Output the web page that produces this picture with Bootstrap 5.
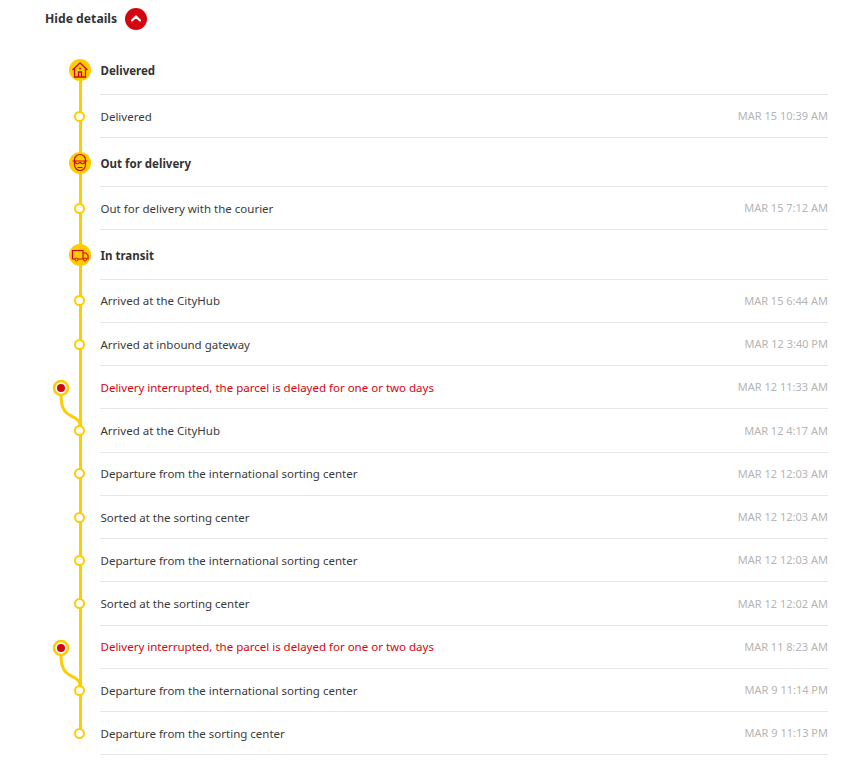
<!DOCTYPE html>
<html lang="en"><head><meta charset="utf-8">
<link href="https://cdn.jsdelivr.net/npm/bootstrap@5.3.0/dist/css/bootstrap.min.css" rel="stylesheet">
<style>
body{background:#fff;color:#3a3a3a;font-family:"Noto Sans","Open Sans",sans-serif;font-size:11.5px;overflow:hidden}
.page-box{padding:7px 36px 0 45px}
.toggle-row{height:23px}
.toggle-label{font-weight:700;font-size:12.2px;color:#333;line-height:23px}
.toggle-btn{width:22px;height:22px;background:#d40511;border:0;padding:0;margin-left:8px}
.tl{position:relative;margin-top:15.6px;padding-left:55px}
.rail{position:absolute;left:34px;top:25px;height:663px;width:3px;background:#fc0}
.tl-row{position:relative;border-bottom:1px solid #e6e6e6;height:43.25px;padding:.5px 0 0 .5px}
.tl-head{height:49.2px;font-weight:700;padding-top:2px;color:#333}
.tl-first{padding-top:1px}
.when{color:#b5b5b5;font-size:11px}
.alert-text{color:#d40511}
.node{position:absolute;left:-26px;top:50%;margin-top:-5.3px;width:11px;height:11px;border-radius:50%;background:#fff;border:2px solid #fc0}
.badge-ico{position:absolute;left:-31px;top:50%;margin-top:-10.3px;width:22px;height:22px}
.detour{position:absolute;left:-50px;top:11px;width:34px;height:52px;overflow:visible}
</style></head><body>
<div class="page-box">
<div class="toggle-row d-flex align-items-center">
<span class="toggle-label">Hide details</span>
<button class="toggle-btn rounded-circle d-flex align-items-center justify-content-center" aria-label="Hide details"><svg width="10" height="7" viewBox="0 0 10 7"><path d="M1 5.500 5 1.500l4 4" fill="none" stroke="#fff" stroke-width="2.200" stroke-linecap="round" stroke-linejoin="round"/></svg></button>
</div>
<div class="tl">
<div class="rail"></div>
<div class="tl-row tl-head tl-first d-flex align-items-center"><svg class="badge-ico" viewBox="0 0 22 22"><circle cx="11" cy="11" r="11" fill="#fc0"/><path d="M3.500 11 11 4l7.500 7M5.500 9.500V18h11V9.500M9.500 18v-5h3v5" fill="none" stroke="#d40511" stroke-width="1.300"/><path d="M10 9.500h2" stroke="#d40511" stroke-width="1.300"/></svg>Delivered</div>
<div class="tl-row d-flex align-items-center justify-content-between"><i class="node"></i><span>Delivered</span><span class="when">MAR 15 10:39 AM</span></div>
<div class="tl-row tl-head d-flex align-items-center"><svg class="badge-ico" viewBox="0 0 22 22"><circle cx="11" cy="11" r="11" fill="#fc0"/><path d="M5.500 9V7.500a5.500 5 0 0 1 11 0V9M5.500 9v3.500a5.500 6 0 0 0 11 0V9M3.500 9h15M6 9.500c0 2.500 3.500 3 4.500 1h1c1 2 4.500 1.500 4.500-1M8.500 15.500h5" fill="none" stroke="#d40511" stroke-width="1.200"/></svg>Out for delivery</div>
<div class="tl-row d-flex align-items-center justify-content-between"><i class="node"></i><span>Out for delivery with the courier</span><span class="when">MAR 15 7:12 AM</span></div>
<div class="tl-row tl-head d-flex align-items-center"><svg class="badge-ico" viewBox="0 0 22 22"><circle cx="11" cy="11" r="11" fill="#fc0"/><path d="M3.500 6.500h10.500v8.500h-10.500zM14 9h3l2 2.500V15h-5" fill="none" stroke="#d40511" stroke-width="1.200"/><circle cx="7.500" cy="15.500" r="1.500" fill="#fc0" stroke="#d40511"/><circle cx="16" cy="15.500" r="1.500" fill="#fc0" stroke="#d40511"/></svg>In transit</div>
<div class="tl-row d-flex align-items-center justify-content-between"><i class="node"></i><span>Arrived at the CityHub</span><span class="when">MAR 15 6:44 AM</span></div>
<div class="tl-row d-flex align-items-center justify-content-between"><i class="node"></i><span>Arrived at inbound gateway</span><span class="when">MAR 12 3:40 PM</span></div>
<div class="tl-row d-flex align-items-center justify-content-between"><svg class="detour" viewBox="0 0 34 52"><path d="M11 18C11 36 18 37 25 41 30 44 30 46 30 50" fill="none" stroke="#fc0" stroke-width="3"/><circle cx="11" cy="11" r="7" fill="#fff" stroke="#fc0" stroke-width="2.500"/><circle cx="11" cy="11" r="4" fill="#d40511"/></svg><span class="alert-text">Delivery interrupted, the parcel is delayed for one or two days</span><span class="when">MAR 12 11:33 AM</span></div>
<div class="tl-row d-flex align-items-center justify-content-between"><i class="node"></i><span>Arrived at the CityHub</span><span class="when">MAR 12 4:17 AM</span></div>
<div class="tl-row d-flex align-items-center justify-content-between"><i class="node"></i><span>Departure from the international sorting center</span><span class="when">MAR 12 12:03 AM</span></div>
<div class="tl-row d-flex align-items-center justify-content-between"><i class="node"></i><span>Sorted at the sorting center</span><span class="when">MAR 12 12:03 AM</span></div>
<div class="tl-row d-flex align-items-center justify-content-between"><i class="node"></i><span>Departure from the international sorting center</span><span class="when">MAR 12 12:03 AM</span></div>
<div class="tl-row d-flex align-items-center justify-content-between"><i class="node"></i><span>Sorted at the sorting center</span><span class="when">MAR 12 12:02 AM</span></div>
<div class="tl-row d-flex align-items-center justify-content-between"><svg class="detour" viewBox="0 0 34 52"><path d="M11 18C11 36 18 37 25 41 30 44 30 46 30 50" fill="none" stroke="#fc0" stroke-width="3"/><circle cx="11" cy="11" r="7" fill="#fff" stroke="#fc0" stroke-width="2.500"/><circle cx="11" cy="11" r="4" fill="#d40511"/></svg><span class="alert-text">Delivery interrupted, the parcel is delayed for one or two days</span><span class="when">MAR 11 8:23 AM</span></div>
<div class="tl-row d-flex align-items-center justify-content-between"><i class="node"></i><span>Departure from the international sorting center</span><span class="when">MAR 9 11:14 PM</span></div>
<div class="tl-row d-flex align-items-center justify-content-between"><i class="node"></i><span>Departure from the sorting center</span><span class="when">MAR 9 11:13 PM</span></div>
</div>
</div>
<script src="https://cdn.jsdelivr.net/npm/bootstrap@5.3.0/dist/js/bootstrap.bundle.min.js"></script>
</body></html>
